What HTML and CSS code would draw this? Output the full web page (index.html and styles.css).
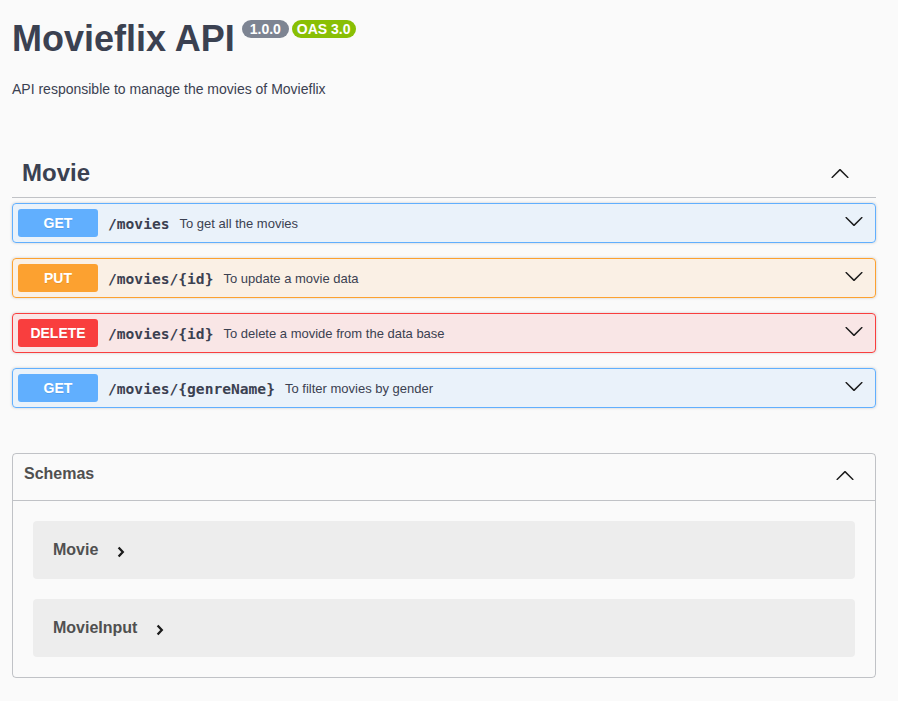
FILE: index.html
```html
<!DOCTYPE html>
<html lang="en">
<head>
<meta charset="utf-8">
<title>Movieflix API</title>
<link rel="stylesheet" href="styles.css">
</head>
<body>
<div class="wrapper">
  <section class="info">
    <div class="title-row">
      <h2 class="title">Movieflix API</h2>
      <span class="badge version">1.0.0</span>
      <span class="badge oas">OAS 3.0</span>
    </div>
    <p class="description">API responsible to manage the movies of Movieflix</p>
  </section>

  <section class="tag-section">
    <h3 class="tag-header">
      <span class="tag-name">Movie</span>
      <svg class="arrow" width="20" height="20" viewBox="0 0 20 20"><path d="M17.418 14.908c.272.268.709.268.979 0s.271-.701 0-.969l-7.908-7.83c-.27-.268-.707-.268-.979 0l-7.908 7.830c-.27.268-.27.701 0 .969.271.268.709.268.979 0L10 7.767l7.418 7.141z"/></svg>
    </h3>

    <div class="opblock get">
      <div class="summary">
        <span class="method">GET</span>
        <span class="path">/movies</span>
        <span class="desc">To get all the movies</span>
        <svg class="arrow down" width="20" height="20" viewBox="0 0 20 20"><path d="M17.418 6.109c.272-.268.709-.268.979 0s.271.701 0 .969l-7.908 7.83c-.27.268-.707.268-.979 0l-7.908-7.83c-.27-.268-.27-.701 0-.969.271-.268.709-.268.979 0L10 13.25l7.418-7.141z"/></svg>
      </div>
    </div>

    <div class="opblock put">
      <div class="summary">
        <span class="method">PUT</span>
        <span class="path">/movies/{id}</span>
        <span class="desc">To update a movie data</span>
        <svg class="arrow down" width="20" height="20" viewBox="0 0 20 20"><path d="M17.418 6.109c.272-.268.709-.268.979 0s.271.701 0 .969l-7.908 7.83c-.27.268-.707.268-.979 0l-7.908-7.83c-.27-.268-.27-.701 0-.969.271-.268.709-.268.979 0L10 13.25l7.418-7.141z"/></svg>
      </div>
    </div>

    <div class="opblock delete">
      <div class="summary">
        <span class="method">DELETE</span>
        <span class="path">/movies/{id}</span>
        <span class="desc">To delete a movide from the data base</span>
        <svg class="arrow down" width="20" height="20" viewBox="0 0 20 20"><path d="M17.418 6.109c.272-.268.709-.268.979 0s.271.701 0 .969l-7.908 7.83c-.27.268-.707.268-.979 0l-7.908-7.830c-.27-.268-.27-.701 0-.969.271-.268.709-.268.979 0L10 13.25l7.418-7.141z"/></svg>
      </div>
    </div>

    <div class="opblock get">
      <div class="summary">
        <span class="method">GET</span>
        <span class="path">/movies/{genreName}</span>
        <span class="desc">To filter movies by gender</span>
        <svg class="arrow down" width="20" height="20" viewBox="0 0 20 20"><path d="M17.418 6.109c.272-.268.709-.268.979 0s.271.701 0 .969l-7.908 7.83c-.27.268-.707.268-.979 0l-7.908-7.83c-.27-.268-.27-.701 0-.969.271-.268.709-.268.979 0L10 13.25l7.418-7.141z"/></svg>
      </div>
    </div>
  </section>

  <section class="models">
    <h4 class="models-header">
      <span class="models-title">Schemas</span>
      <svg class="arrow" width="20" height="20" viewBox="0 0 20 20"><path d="M17.418 14.908c.272.268.709.268.979 0s.271-.701 0-.969l-7.908-7.83c-.27-.268-.707-.268-.979 0l-7.908 7.83c-.27.268-.27.701 0 .969.271.268.709.268.979 0L10 7.767l7.418 7.141z"/></svg>
    </h4>
    <div class="models-body">
      <div class="model">
        <span class="model-title">Movie</span>
        <svg class="model-toggle" width="8" height="12" viewBox="0 0 8 12"><path d="M1.6 1.5 L5.8 6 L1.6 10.5" fill="none" stroke="#1b1b1b" stroke-width="2.3"/></svg>
      </div>
      <div class="model">
        <span class="model-title">MovieInput</span>
        <svg class="model-toggle" width="8" height="12" viewBox="0 0 8 12"><path d="M1.6 1.5 L5.8 6 L1.6 10.5" fill="none" stroke="#1b1b1b" stroke-width="2.3"/></svg>
      </div>
    </div>
  </section>
</div>
</body>
</html>
```

FILE: styles.css
```css
html, body {
  margin: 0;
  padding: 0;
  background: #fafafa;
}

body {
  font-family: "Liberation Sans", Arial, sans-serif;
  color: #3b4151;
}

.wrapper {
  padding: 0 22px 0 12px;
}

.info {
  padding-top: 18px;
}

.title-row {
  display: flex;
  align-items: flex-start;
}

.title {
  margin: 0;
  font-size: 36px;
  line-height: 41px;
  font-weight: 700;
  color: #3b4151;
}

.badge {
  display: inline-block;
  margin-top: 2px;
  font-size: 14px;
  line-height: 14px;
  font-weight: 700;
  color: #fff;
  border-radius: 57px;
  padding: 2px 8px;
}

.version {
  background: #7d8492;
  margin-left: 7px;
}

.oas {
  background: #89bf04;
  margin-left: 3px;
  padding: 2px 5px;
}

.description {
  margin: 20px 0 0;
  font-size: 14px;
  line-height: 20px;
}

.tag-section {
  margin-top: 49px;
}

.tag-header {
  display: flex;
  align-items: center;
  justify-content: space-between;
  margin: 0 0 5px;
  padding: 10px 26px 10px 10px;
  border-bottom: 1px solid rgba(59, 65, 81, 0.3);
  font-size: 24px;
  line-height: 29px;
  font-weight: 700;
  color: #3b4151;
}

.arrow {
  display: block;
  fill: #1b1b1b;
}

.opblock {
  border: 1px solid;
  border-radius: 4px;
  margin-bottom: 15px;
  box-shadow: 0 0 3px rgba(0, 0, 0, 0.19);
}

.summary {
  display: flex;
  align-items: center;
  padding: 5px;
}

.method {
  min-width: 80px;
  padding: 6px 0;
  font-size: 14px;
  line-height: 16px;
  font-weight: 700;
  text-align: center;
  color: #fff;
  border-radius: 3px;
  text-shadow: 0 1px 0 rgba(0, 0, 0, 0.1);
}

.path {
  padding: 0 10px;
  font-family: "DejaVu Sans Mono", monospace;
  font-size: 14.6px;
  font-weight: 700;
  color: #3b4151;
}

.desc {
  flex: 1;
  font-size: 13px;
  color: #3b4151;
}

.arrow.down {
  margin-right: 6px;
  margin-top: -5px;
}

.get {
  border-color: #61affe;
  background: rgba(97, 175, 254, 0.1);
}
.get .method { background: #61affe; }

.put {
  border-color: #fca130;
  background: rgba(252, 161, 48, 0.1);
}
.put .method { background: #fca130; }

.delete {
  border-color: #f93e3e;
  background: rgba(249, 62, 62, 0.1);
}
.delete .method { background: #f93e3e; }

.models {
  margin-top: 45px;
  border: 1px solid rgba(59, 65, 81, 0.3);
  border-radius: 4px;
}

.models-header {
  display: flex;
  align-items: flex-start;
  justify-content: space-between;
  margin: 0;
  padding: 10px 20px 15px 11px;
  border-bottom: 1px solid rgba(59, 65, 81, 0.3);
  font-size: 16px;
  line-height: 20px;
  font-weight: 700;
  color: #505050;
}

.models-header .arrow {
  margin-top: 1px;
}

.models-body {
  padding: 20px;
  display: flex;
  flex-direction: column;
  gap: 20px;
}

.model {
  display: flex;
  align-items: center;
  padding: 20px;
  background: rgba(0, 0, 0, 0.05);
  border-radius: 4px;
}

.model-title {
  font-size: 16px;
  line-height: 18px;
  font-weight: 700;
  color: #505050;
}

.model-toggle {
  display: block;
  margin-left: 19px;
  margin-top: 3px;
}
```
